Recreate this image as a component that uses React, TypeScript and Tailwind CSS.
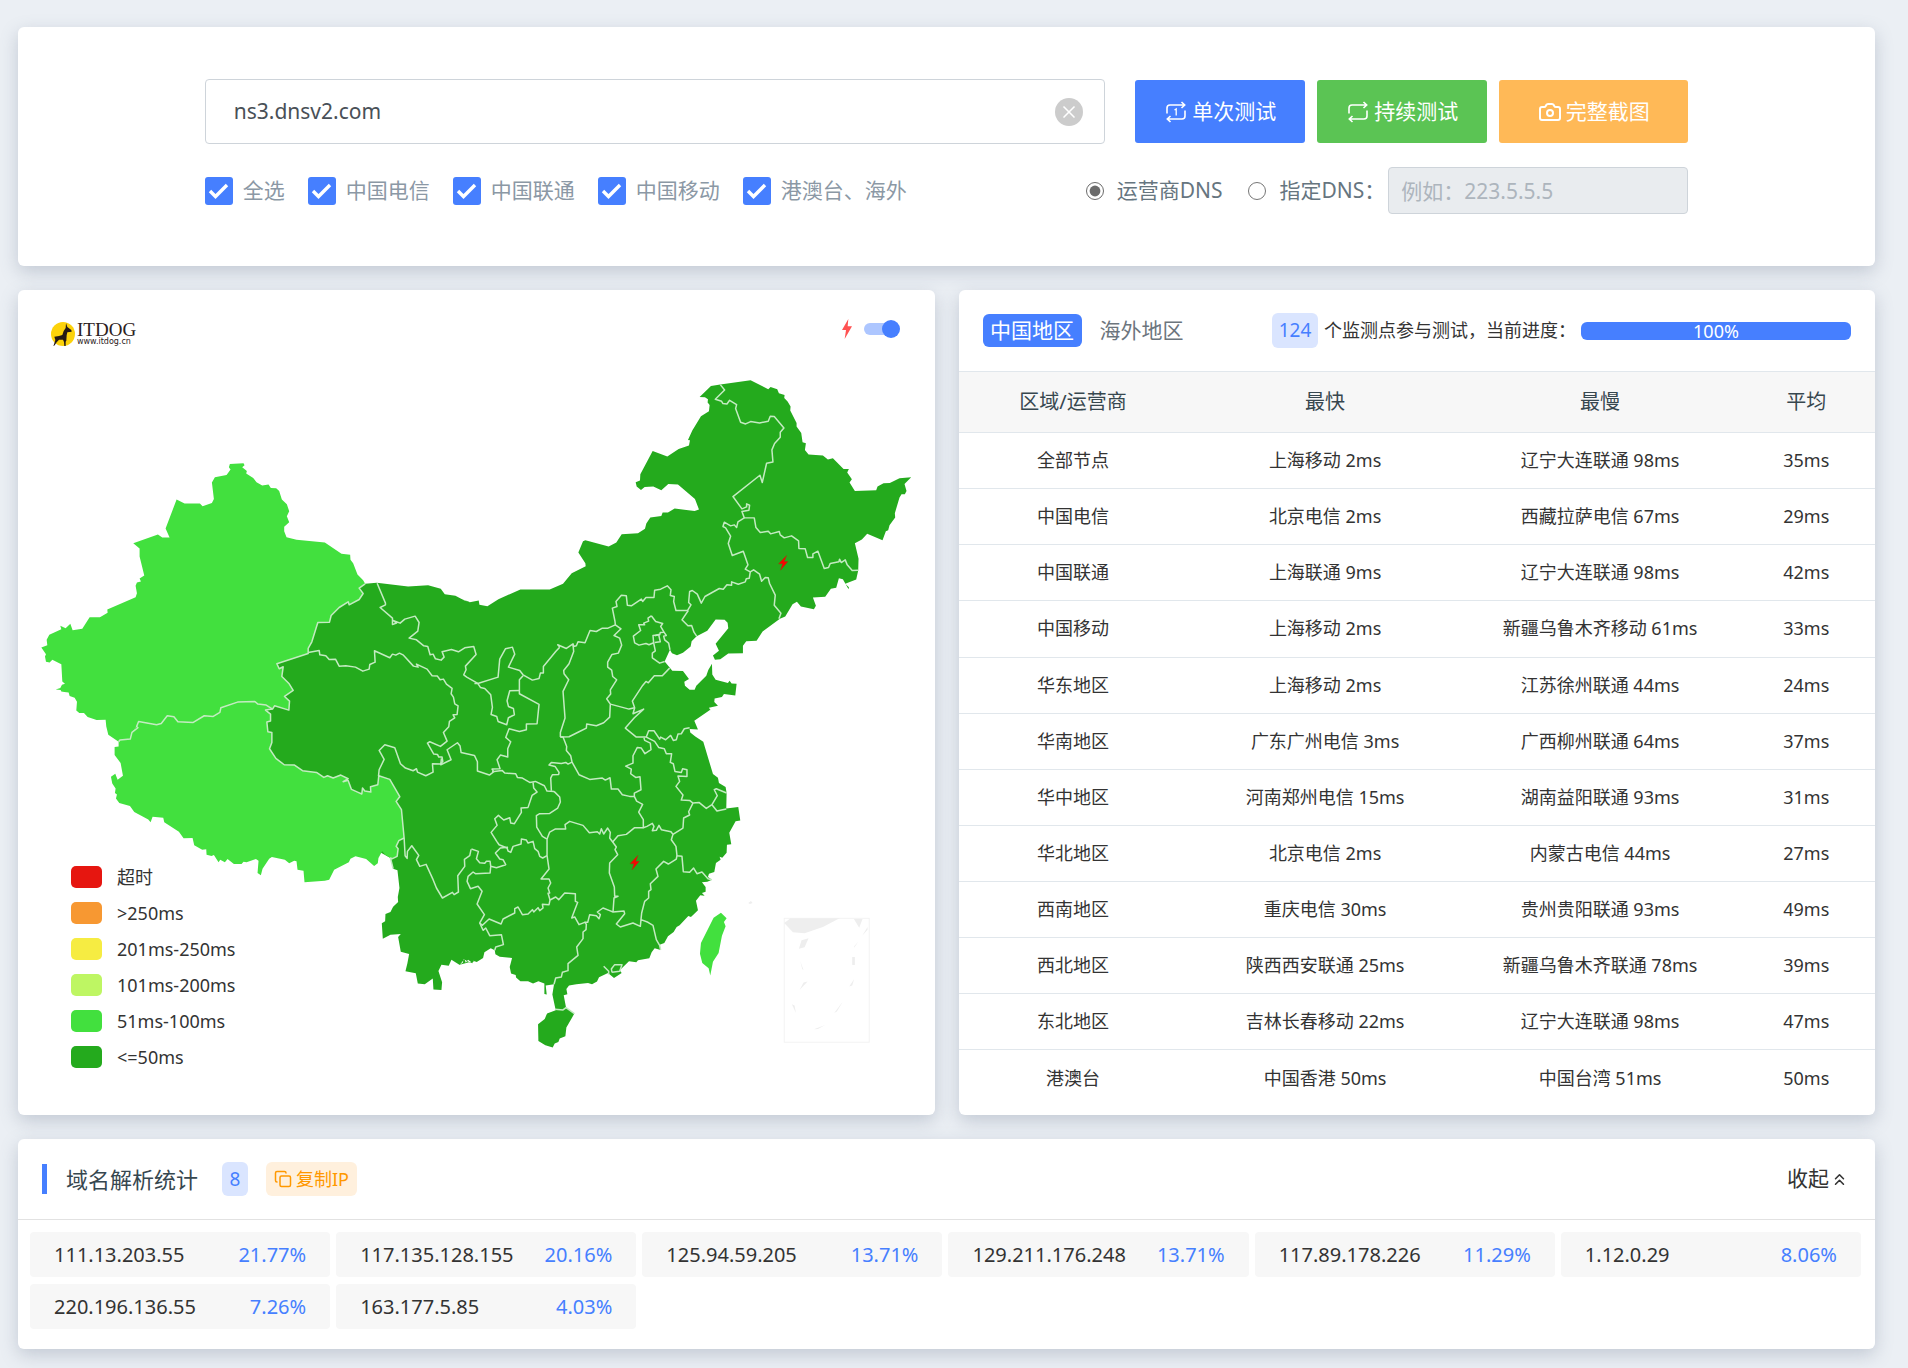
import { Camera, ChevronsUp, Copy, X } from "lucide-react";

type Tile = [dx: number, dy: number, points: string];

// The map is digitised in tiles, every tile with its own origin
const NW: [number, number] = [-54, -30];
const SW: [number, number] = [-54, 1110];
const NE: [number, number] = [1326, 210];
const SE: [number, number] = [1326, 1170];
const MID: [number, number] = [666, 810];

function outline(tiles: Tile[]) {
  const points = tiles.flatMap(([dx, dy, list]) =>
    list.split(" ").map((pair) => {
      const [x, y] = pair.split(",").map(Number);
      return `${x + dx},${y + dy}`;
    }),
  );
  return points.join(" ");
}

const XINJIANG = outline([
  [
    ...NW,
    "690,552 731,550 734,556 727,562 741,573 739,581 760,594 770,607 787,617 806,614 813,624 829,625 838,633 846,659 861,673 868,694 861,709 868,727 853,741 853,754 860,772 890,780 975,788 1025,822 1051,825 1052,840 1060,850 1073,884 1090,901 1096,912 1078,925 1090,941 1078,959 1048,975 1045,966 1018,983 994,1007 989,1027 954,1028 936,1086 925,1106 925,1121 831,1152 838,1167 850,1161",
  ],
  [
    ...SW,
    "846,50 868,72 880,92 854,110 869,124 867,151 824,138 818,148 799,136 774,133 765,125 713,127 663,144 660,158 640,170 613,168 580,188 534,186 522,171 502,168 484,191 470,195 416,185 410,200 396,218 391,238 360,241 356,246 325,225 319,200 317,180 290,181 263,172 252,160 238,160 229,152 231,126 224,114 209,109 206,98 193,97 184,95 182,91 167,89 181,85 186,75 195,72 187,65 184,12",
  ],
  [
    ...NW,
    "184,1153 157,1140 149,1148 138,1146 135,1130 138,1123 124,1103 142,1096 140,1080 148,1065 184,1048 181,1038 197,1045 211,1032 218,1051 247,1047 269,1012 300,1012 323,999 322,989 407,952 411,940 407,918 411,908 423,905 419,896 433,887 419,830 419,806 400,790 474,764 487,773 509,773 497,746 530,659 554,671 600,671 608,679 636,669 642,657 636,608 645,592 680,585 692,569 687,562",
  ],
]);

const TIBET = outline([
  [
    ...SW,
    "818,148 797,151 812,163 812,184 801,187 804,216 816,218 816,248 809,267 828,296 853,315 884,316 908,333 950,338 972,353 983,348 1000,355 1023,346 1045,357 1030,366 1045,362 1055,389 1075,398 1086,403 1088,385 1095,394 1113,397 1112,381 1134,375 1137,348 1170,359 1200,411 1189,425 1205,450 1213,535 1197,543 1189,560 1195,567 1192,590 1178,597 1172,595 1157,586 1147,575 1136,595 1134,611 1123,619 1099,598 1067,590 1052,597 1047,608 1003,630 988,660 975,663 914,668 911,633 893,630 890,605 883,603 868,611 855,600 816,592 808,597 788,627 783,647 773,640 776,603 768,598 740,608 731,606 725,613 702,613 683,598 675,608 661,600 656,608 642,586 635,589 620,585 619,569 607,570 583,557 578,535 551,536 537,516 493,488 490,474 458,471 452,488 445,479 403,457 390,439 358,430 348,416 351,404 345,400 347,386 337,371 333,351 346,342 353,360 369,348 362,310 344,286 344,262 356,260 356,246 360,241 391,238 396,218 410,200 416,185 470,195 484,191 502,168 522,171 534,186 580,188 613,168 640,170 660,158 663,144 713,127 765,125 774,133 799,136",
  ],
]);

const EAST = outline([
  [...NW, "1096,912 1131,909 1225,920 1285,916 1323,927 1335,943 1367,948 1394,962 1412,967"],
  [
    ...NE,
    "0,715 30,727 57,722 59,735 83,739 116,718 182,689 270,689 310,672 336,640 378,619 377,610 356,578 370,544 377,541 447,560 470,548 486,523 535,520 556,507 560,491 572,473 605,468 609,458 625,458 645,446 680,450 705,453 718,449 706,417 655,374 626,372 605,391 581,380 555,381 544,390 531,380 528,367 541,362 542,343 579,273 623,290 657,267 688,257 691,241 685,240 698,212 724,169 748,154 750,135 744,128 745,118 736,112 720,111 754,78 782,74 873,61 926,88 933,81 953,88 958,100 975,105 974,114 984,125 993,140 992,152 1011,189 1011,200 1025,219 1029,247 1039,250 1036,270 1047,284 1090,287 1105,299 1120,295 1152,327 1168,327 1163,338 1177,358 1170,368 1186,393 1250,391 1254,380 1272,370 1291,369 1320,355 1355,352 1335,372 1341,393 1336,403 1326,403 1320,413 1306,460 1307,473 1290,496 1286,511 1279,514 1269,541 1223,522 1207,539 1186,550 1197,597 1196,632 1190,659 1157,672 1168,682 1167,688 1150,658 1138,655 1130,684 1114,687 1097,711 1060,713 1069,738 1063,748 1024,740 1012,726 999,733 977,770 961,777 909,815 891,843 860,844 850,858 850,880 806,881 782,898 766,900 760,887 778,873 768,852 806,805 804,789 795,780 768,779 743,813 711,829 696,844 693,860 670,879 652,886 637,880 631,870 615,905 638,933 670,934 688,958 674,966 676,978 690,990 705,990 710,978 740,948 746,931 757,912 758,944 768,960 805,970 810,963 816,971 831,972 827,1007 793,1003 787,1012 765,1016 764,1027 775,1038 748,1044 757,1058 752,1050 704,1083 715,1109 690,1108",
  ],
  [
    ...SE,
    "692,158 707,170 731,186 760,283 775,294 778,310 798,322 801,340 800,386 836,382 842,422 828,425 809,459 815,494 802,495 801,519 788,534 780,531 783,540 769,550 764,577 748,582 745,592 757,600 743,606 727,608 738,622 738,636 727,640 735,648 722,647 709,663 715,692 694,712 686,709 660,737 651,742 642,757 625,770 614,790 600,795 603,811 585,806 576,818 569,836 535,842 530,848 508,845 480,872 486,880 463,895 445,880 418,893 412,906 397,914 385,910 350,914 328,918 320,928 323,944 312,947 319,984 344,1002 320,1044 317,1070 300,1077 296,1087 285,1092 279,1104 257,1097 236,1084 235,1034 255,1018 262,1002 288,992 278,945 283,914 258,918 261,945 254,943 254,912 236,905 220,912 205,905 182,905 169,894 168,886 154,882 150,862 157,835 120,831 107,824 105,812 93,806 74,818 70,835 51,847 40,843 38,851 20,843 12,838 9,849 0,855",
  ],
  [
    ...SW,
    "1424,903 1417,909 1405,900 1398,909 1394,898 1380,916 1355,900 1347,918 1325,915 1316,934 1327,968 1325,991 1301,990 1299,957 1275,974 1254,972 1248,941 1217,935 1223,910 1228,883 1203,876 1195,832 1203,823 1172,825 1149,837 1146,791 1156,785 1157,763 1172,757 1180,741 1195,727 1194,712 1199,685 1193,632 1180,627 1172,595 1000,500 760,250 780,20",
  ],
  [...NW, "900,1000"],
]);

const BORDERS: { origin: [number, number]; lines: string[] }[] = [
  {
    origin: MID,
    lines: [
      "412,70 437,130 437,135 421,143 458,175 458,194 470,190 460,182 481,190 495,178 526,169 538,188 534,214 508,235 530,240 552,258 564,260 571,285 580,283 587,297 604,301 613,292 607,276 635,269 656,276 675,264 702,260 709,284 677,319 679,330 672,345 681,352 714,371 775,352 780,298 797,267 818,262 825,283 806,322 840,332 850,345 878,361 898,356 902,340 911,340 911,320 948,275 960,262",
      "205,278 238,272 240,285 258,288 268,299 287,298 298,319 318,318 347,322 369,334 388,328 390,314 406,307 404,273 450,294 458,283 468,286 479,280 491,286 521,319 535,322 530,313 562,328 577,348 593,349 601,360 611,358 620,373 637,386 634,402 641,412 645,432 655,438 652,464 640,465 645,474 629,485 627,501 611,518 622,544 602,560 570,546 563,550 582,583 593,584 597,592 607,592 609,605 602,613 578,612 580,637 558,648 533,637 530,627 520,633 497,625 482,612 465,564 435,555 418,572 433,599 418,630 416,650",
      "605,596 603,615 634,600 622,570 653,549 661,559 664,578 704,587 713,606 713,634 749,646 762,636 757,628 781,627 772,600 782,586 804,592 804,567 813,546 798,533 808,507 839,515 860,510 860,493 892,492 898,434 839,402 839,360 850,348",
      "704,371 714,371 722,383 735,386 753,405 758,443 754,464 771,470 775,485 801,495 806,474 824,465 821,446 806,440 802,423 810,393 839,392",
      "757,636 787,632 795,640 828,642 833,653 848,655 870,668 887,665 914,678 922,694 943,695",
    ],
  },
  {
    origin: NE,
    lines: [
      "300,862 294,855 320,866 340,852 342,860 350,858 355,846 376,849 391,812 410,815 428,805 445,805 467,795 466,785 458,745 472,740 469,725 485,706 500,708 503,736 515,738 545,718 549,725 559,713 583,713 585,691 603,688 623,678 634,690 632,707 644,710 642,725 649,752 684,752 694,735 687,728 690,695 698,692 713,703 725,730 736,710 779,686 791,688 802,675 816,676 816,666 836,673 857,666 860,657 869,655 872,636 857,628 865,615 851,574 818,587 806,551 813,529 798,504 790,500 794,487 813,498 824,495 831,503 835,486 854,474 847,455 868,451 870,436 861,432 861,441 847,447 820,410 901,346 908,368 921,310 940,306 937,270 945,251 962,232 962,217 973,204 944,170 932,169 926,184 900,189 873,185 858,192 843,187 828,146 831,134 810,121 802,132 790,131 786,124 767,118 795,90 782,74",
      "854,474 884,474 889,503 902,518 926,514 933,522 959,515 962,525 974,534 996,528 1017,543 1018,566 1037,567 1044,593 1060,593 1060,582 1075,574 1094,626 1107,623 1112,611 1138,606 1140,598 1145,608 1157,600 1163,615 1178,632 1196,631",
      "872,636 882,630 900,643 906,664 917,653 926,654 930,671 947,706 944,736 964,760 958,777",
      "686,752 667,780 685,798 696,797 703,817 711,829",
      "575,768 565,775 567,784 552,790 555,795 537,795 543,812 521,829 525,849 538,856 559,851 568,855 582,849 580,827 600,825 602,818 613,817 603,800 609,791 588,785 575,768",
      "582,849 587,873 578,880 578,894 600,910 615,905",
      "613,817 620,827 612,829 615,840 627,850 630,865 631,870",
      "586,828 597,824 602,846 585,848",
      "340,855 342,875 328,912 312,932 313,942 327,960 310,995 316,1075 302,1118 302,1132",
      "467,795 484,807 463,827 480,835 486,856 476,880 457,884 444,907 444,922 456,931 459,950 471,960 452,990 453,1003 441,1017 452,1033 450,1072 432,1089 410,1098 381,1093 380,1105 358,1116 328,1131 302,1132",
      "630,925 608,948 584,948 566,969 559,965 549,977 518,1024 525,1044 508,1048 452,1033",
      "525,1044 520,1062 552,1048 524,1074 497,1105 530,1132 560,1132 567,1113 583,1113 600,1138 603,1132 618,1140 633,1127 641,1142 650,1140 655,1123 665,1122 674,1107 690,1104",
    ],
  },
  {
    origin: SE,
    lines: [
      "302,172 310,172 321,200 320,212 333,228 337,247 358,285 390,299 428,295 437,301 451,294 455,328 475,328 488,345 510,350 524,350 524,340 544,330 541,291 528,293 513,282 515,268 498,259 520,250 520,228 533,203 545,205 556,222 574,210 572,190 555,182 553,174",
      "337,247 325,253 318,248 305,251 275,248 268,256 286,260 298,278 297,284 278,285 273,295 275,333",
      "560,172 585,185 597,203 614,207 620,222 636,222 632,248 641,252 646,275 665,278 669,267 682,270 682,290 655,289 660,305 649,320 670,346 665,361 690,362 700,370 718,368 740,386 757,375 773,348 764,330 770,327 801,340",
      "757,375 772,394 800,388",
      "700,370 687,396 690,406 672,415 670,445 640,464",
      "524,350 531,364 549,374 537,397 551,420 551,444 562,440 578,431 583,440 578,453 590,452 598,437 605,450 634,456 640,464 635,480 649,500 652,528 667,530 671,576 690,578 702,565 712,582 727,577 745,597 757,600",
      "551,444 525,444 500,464 475,468 459,487",
      "652,528 650,538 626,553 612,545 589,568 595,590 572,612 574,630 567,635 567,655 555,665 546,700 544,720",
      "262,478 270,457 286,448 318,448 316,435 330,425 370,437 389,459 413,456 420,463 425,447 432,463 444,445 452,458 450,475 459,487 470,502 466,510 474,525 450,550 449,580 464,622 465,650 475,650 463,655 460,697",
      "283,335 300,352 302,367 294,385 270,401 240,402 230,408 231,442 248,470 262,478 262,528 268,568 244,598 268,598 273,610 265,625 270,640 265,641 271,661",
      "220,308 222,325 232,337 217,347 205,383 184,385 185,398 164,432 153,430 150,414 132,421 116,407 105,417 112,437 94,458 111,485 118,495 142,505 145,514 153,518 160,500 184,493 185,478 200,481 205,490 220,485 225,507 235,515 240,530 249,535 262,528",
      "145,503 122,505 107,520 120,538 130,540 138,555 110,564 93,560 91,545 80,545 75,551 60,549 50,537 56,515 35,508",
      "93,560 91,580 47,582 40,577 25,590 22,605 32,627 55,620 67,635 52,673 74,705 60,730 68,737 88,718 124,733 130,718 165,700 165,687 175,682 188,705 205,703 218,690 222,697 235,684 240,693 250,685 248,674 268,675 271,661 288,652 297,660 315,640 347,642 347,665 354,668 336,715 345,712 358,735 375,728 380,733",
      "60,730 70,752 78,745 90,768 125,765 131,795 108,802 105,812",
      "380,733 379,750 370,757 370,777 351,802 355,827 325,852 325,873 308,878 305,892 288,895 283,914",
      "375,728 384,728 390,705 410,708 418,717 422,705 413,697 430,685 450,693 460,697 493,694 495,702 470,733 482,742 520,730 542,740 544,720 565,728 580,737 590,780 600,797 603,811",
      "457,878 455,868 465,855 487,855 480,875 457,878",
      "432,860 447,875 447,885",
      "286,989 310,991 319,984 344,1002",
    ],
  },
  {
    origin: SW,
    lines: [
      "1213,535 1216,588 1222,596 1223,575 1236,558 1257,587 1250,600 1260,620 1279,614 1300,660 1310,685 1328,715 1358,698 1363,705 1376,697 1374,648 1395,620 1394,599 1410,588 1414,569",
      "1213,535 1197,543 1189,560 1195,567 1192,590 1178,597 1172,595 1180,627",
    ],
  },
];

const LEGEND = [
  { label: "超时", color: "bg-[#e61610]" },
  { label: ">250ms", color: "bg-[#f79832]" },
  { label: "201ms-250ms", color: "bg-[#f6ec42]" },
  { label: "101ms-200ms", color: "bg-[#bef663]" },
  { label: "51ms-100ms", color: "bg-[#42e03e]" },
  { label: "<=50ms", color: "bg-[#24aa1d]" },
];

const ISPS = ["全选", "中国电信", "中国联通", "中国移动", "港澳台、海外"];

const ROWS = [
  ["全部节点", "上海移动 2ms", "辽宁大连联通 98ms", "35ms"],
  ["中国电信", "北京电信 2ms", "西藏拉萨电信 67ms", "29ms"],
  ["中国联通", "上海联通 9ms", "辽宁大连联通 98ms", "42ms"],
  ["中国移动", "上海移动 2ms", "新疆乌鲁木齐移动 61ms", "33ms"],
  ["华东地区", "上海移动 2ms", "江苏徐州联通 44ms", "24ms"],
  ["华南地区", "广东广州电信 3ms", "广西柳州联通 64ms", "37ms"],
  ["华中地区", "河南郑州电信 15ms", "湖南益阳联通 93ms", "31ms"],
  ["华北地区", "北京电信 2ms", "内蒙古电信 44ms", "27ms"],
  ["西南地区", "重庆电信 30ms", "贵州贵阳联通 93ms", "49ms"],
  ["西北地区", "陕西西安联通 25ms", "新疆乌鲁木齐联通 78ms", "39ms"],
  ["东北地区", "吉林长春移动 22ms", "辽宁大连联通 98ms", "47ms"],
  ["港澳台", "中国香港 50ms", "中国台湾 51ms", "50ms"],
];

const IPS = [
  ["111.13.203.55", "21.77%"],
  ["117.135.128.155", "20.16%"],
  ["125.94.59.205", "13.71%"],
  ["129.211.176.248", "13.71%"],
  ["117.89.178.226", "11.29%"],
  ["1.12.0.29", "8.06%"],
  ["220.196.136.55", "7.26%"],
  ["163.177.5.85", "4.03%"],
];

const CARD = "rounded-md bg-white shadow-[0_6px_18px_rgba(90,105,130,0.28)]";

function RepeatIcon({ once = false }: { once?: boolean }) {
  return (
    <svg
      viewBox="0 0 24 24"
      className="size-6"
      fill="none"
      stroke="currentColor"
      strokeWidth="1.6"
      aria-hidden="true"
    >
      <path d="M3 13.5V8a3 3 0 0 1 3-3h14.5M17.5 2l3.2 3-3.2 3" />
      <path d="M21 10.5V16a3 3 0 0 1-3 3H3.5M6.5 22l-3.2-3 3.2-3" />
      {once && <path d="M10.5 10l1.7-1v6.5" strokeWidth="1.3" />}
    </svg>
  );
}

function IspCheckbox({ label }: { label: string }) {
  return (
    <label className="flex items-center gap-2.5">
      <span className="grid size-7">
        <input
          type="checkbox"
          defaultChecked
          className="col-start-1 row-start-1 size-7 appearance-none rounded-[3px] bg-[#467fff]"
        />
        <svg
          viewBox="0 0 28 28"
          className="pointer-events-none col-start-1 row-start-1 size-7"
          fill="none"
          stroke="#fff"
          strokeWidth="3.4"
        >
          <path d="M5 14l5.5 5.5L22 8" />
        </svg>
      </span>
      {label}
    </label>
  );
}

function QueryPanel() {
  return (
    <form className={`${CARD} py-[52px]`}>
      <div className="mx-auto w-4/5 px-px">
        <div className="flex items-center">
          <div className="flex h-[65px] min-w-0 flex-1 items-center rounded border border-[#ced4da] pr-[21px] pl-7">
            <input
              type="text"
              aria-label="域名"
              defaultValue="ns3.dnsv2.com"
              className="min-w-0 flex-1 text-[21px] text-[#495057] outline-none"
            />
            <button
              type="button"
              aria-label="清空"
              className="flex size-7 items-center justify-center rounded-full bg-[#ccc] text-white"
            >
              <X className="size-5" strokeWidth={2} />
            </button>
          </div>
          <div className="ml-[30px] flex gap-3 text-[21px] text-white">
            <button
              type="button"
              className="flex h-[63px] w-[170px] items-center justify-center gap-1 rounded-[3px] bg-[#467fff]"
            >
              <RepeatIcon once />
              单次测试
            </button>
            <button
              type="button"
              className="flex h-[63px] w-[170px] items-center justify-center gap-1 rounded-[3px] bg-[#5bc454]"
            >
              <RepeatIcon />
              持续测试
            </button>
            <button
              type="button"
              className="flex h-[63px] w-[189px] items-center justify-center gap-1 rounded-[3px] bg-[#ffb957]"
            >
              <Camera className="size-6" strokeWidth={2} />
              完整截图
            </button>
          </div>
        </div>

        <div className="mt-[23px] flex items-center text-[21px] text-[#8b98a5]">
          <div className="flex gap-[23px]">
            {ISPS.map((label) => (
              <IspCheckbox key={label} label={label} />
            ))}
          </div>
          <div className="ml-auto flex items-center text-[#66757f]">
            <label className="flex items-center gap-[13px]">
              <input type="radio" name="dns" defaultChecked className="size-[18px] accent-[#6b6b6b]" />
              运营商DNS
            </label>
            <label className="mr-[3px] ml-[26px] flex items-center gap-[13px]">
              <input type="radio" name="dns" className="size-[18px]" />
              指定DNS：
            </label>
            <input
              type="text"
              disabled
              aria-label="DNS"
              placeholder="例如：223.5.5.5"
              className="h-[47px] w-[300px] rounded border border-[#ced4da] bg-[#e9ecef] px-3 placeholder:text-[#adb5bd]"
            />
          </div>
        </div>
      </div>
    </form>
  );
}

function Logo() {
  return (
    <div className="flex items-center gap-[2px] text-[#2b2020]">
      <svg viewBox="0 0 72 72" className="size-6">
        <circle cx="36" cy="36" r="36" fill="#fcd20a" />
        <path
          d="M45 3l4 12 12 9 1 5-13 2-2 9-1 16-2 3v14h-4l-1-13-3-7-12 0-7 8-6 9-4 3 4-12 2-7-3-10 14-2 10-3 4-12 6-9z"
          fill="#231815"
        />
      </svg>
      <div>
        <div className="font-['Liberation_Serif',serif] text-[19px] leading-4">ITDOG</div>
        <div className="font-['DejaVu_Sans',sans-serif] text-[8px] leading-2">www.itdog.cn</div>
      </div>
    </div>
  );
}

function Bolt({ x, y }: { x: number; y: number }) {
  return (
    <path
      transform={`translate(${x} ${y})`}
      d="M10-22L-14 3-2 3-8 22 14-4 3-4z"
      fill="#fe0000"
      stroke="#8a4a10"
      strokeWidth="1.5"
    />
  );
}

function ChinaMap() {
  return (
    <svg viewBox="0 0 2751 2475" className="block w-full" role="img" aria-label="中国地图">
      <polygon points={EAST} fill="#24aa1d" />
      <g fill="#42e03e">
        <polygon points={XINJIANG} />
        <polygon points={TIBET} />
      </g>
      <g fill="none" stroke="#c3ebc1" strokeWidth="4.5" strokeLinejoin="round">
        {BORDERS.map(({ origin, lines }) => (
          <g key={origin.join()} transform={`translate(${origin.join()})`}>
            {lines.map((points) => (
              <polyline key={points} points={points} />
            ))}
          </g>
        ))}
        <polyline
          points={outline([
            [
              ...NW,
              "1096,912 1078,925 1090,941 1078,959 1048,975 1045,966 1018,983 994,1007 989,1027 954,1028 936,1086 925,1106 925,1121 831,1152 838,1167 850,1161",
            ],
            [
              ...SW,
              "846,50 868,72 880,92 854,110 869,124 867,151 824,138 818,148 797,151 812,163 812,184 801,187 804,216 816,218 816,248 809,267 828,296 853,315 884,316 908,333 950,338 972,353 983,348 1000,355 1023,346 1045,357 1030,366 1045,362 1055,389 1075,398 1086,403 1088,385 1095,394 1113,397 1112,381 1134,375 1137,348 1170,359 1200,411 1189,425 1205,450 1213,535",
            ],
          ])}
        />
        <polyline
          points={outline([
            [
              ...SW,
              "356,246 360,241 391,238 396,218 414,204 410,200 416,185 470,195 484,191 502,168 522,171 534,186 580,188 613,168 640,170 660,158 663,144 713,127 765,125 774,133 799,136 818,148",
            ],
          ])}
        />
      </g>
      <g transform={`translate(${SE.join()})`}>
        <polygon
          points="784,699 762,714 724,790 721,822 728,850 747,866 752,888 760,846 777,820 787,768 798,740 793,727 801,716"
          fill="#42e03e"
        />
        <rect x="974" y="716" width="255" height="372" fill="none" stroke="#f3f3f3" strokeWidth="3" />
        <g fill="#eee">
          <path d="M974 730l19-14h147l-50 26-55 19-35-3z" />
          <path d="M1183 718h26l-10 26z" />
          <path d="M1026 782l21-6-12 27-17 4z" />
          <path d="M1178 832h8v24h-8z" />
          <path d="M866 670l8-6 5 6-8 3z" />
          <path d="M1224 742v8l-16 18zM1196 786l-12 18v-4zM1022 844l10 28-4-4zM1044 906l-24 25 12-22zM1184 898l-6 20-9 3zM997 974l8 4 4 22zM1150 966l-18 30-8 4zM1097 1036l-22 12-12 1z" />
        </g>
        <Bolt x={971} y={-351} />
        <Bolt x={525} y={549} />
      </g>
    </svg>
  );
}

function MapPanel() {
  return (
    <section className={`${CARD} relative overflow-hidden`}>
      <ChinaMap />
      <div className="absolute top-8 left-[33px]">
        <Logo />
      </div>
      <label className="absolute top-[29px] right-[35px] flex items-center gap-3">
        <svg viewBox="0 0 30 60" className="h-5 w-2.5" fill="#ff5252" aria-hidden="true">
          <path d="M19 0L0 33h12L8 60 30 22H17z" />
        </svg>
        <span className="grid items-center">
          <input
            type="checkbox"
            role="switch"
            aria-label="闪烁"
            defaultChecked
            className="col-start-1 row-start-1 h-3 w-[34px] appearance-none rounded-full bg-[#adc6ff]"
          />
          <span className="pointer-events-none col-start-1 row-start-1 ml-[18px] size-[18px] rounded-full bg-[#467fff]" />
        </span>
      </label>
      <ul className="absolute bottom-[46px] left-[53px] text-[18px] leading-6 text-[#333]">
        {LEGEND.map(({ label, color }) => (
          <li key={label} className="mt-3 flex h-6 items-center gap-[15px]">
            <span className={`h-[22px] w-[31px] rounded-[5px] ${color}`} />
            {label}
          </li>
        ))}
      </ul>
    </section>
  );
}

function ResultPanel() {
  return (
    <section className={`${CARD} pb-[9px]`}>
      <div className="flex h-[81px] items-center px-6">
        <button type="button" className="h-[33px] w-[99px] rounded-md bg-[#467fff] text-[21px] leading-none text-white">
          中国地区
        </button>
        <button type="button" className="ml-[18px] text-[21px] text-[#6c757d]">
          海外地区
        </button>
        <div className="ml-auto flex items-center text-[18px] text-[#333]">
          <span className="mr-1.5 flex h-[35px] w-[46px] items-center justify-center rounded-md bg-[#dae5ff] text-[19px] text-[#467fff]">
            124
          </span>
          个监测点参与测试，当前进度：
          <span className="ml-[5px] flex h-[18px] w-[270px] items-center justify-center rounded-md bg-[#467fff] leading-none text-white">
            100%
          </span>
        </div>
      </div>
      <table className="h-[735px] w-full table-fixed text-center text-[18px] text-[#333]">
        <thead>
          <tr className="h-[61px] border-y border-[#e1e7ec] bg-[#f7f7f7] text-[20px] text-[#37474f]">
            <th className="w-1/4 font-normal">区域/运营商</th>
            <th className="w-[30%] font-normal">最快</th>
            <th className="w-[30%] font-normal">最慢</th>
            <th className="w-[15%] font-normal">平均</th>
          </tr>
        </thead>
        <tbody>
          {ROWS.map((row) => (
            <tr key={row[0]} className="h-14 border-b border-[#e1e7ec] last:border-0">
              {row.map((cell, i) => (
                <td key={i}>{cell}</td>
              ))}
            </tr>
          ))}
        </tbody>
      </table>
    </section>
  );
}

function IpPanel() {
  return (
    <section className={`${CARD} pb-5`}>
      <div className="flex h-[81px] items-center border-b border-[#e2e2e2] px-6">
        <h2 className="flex items-center gap-[19px] text-[22px] text-[#37474f]">
          <span className="h-[30px] w-[5px] bg-[#467fff]" />
          域名解析统计
        </h2>
        <span className="ml-6 flex h-[34px] w-[26px] items-center justify-center rounded-md bg-[#dae5ff] text-[19px] text-[#467fff]">
          8
        </span>
        <button
          type="button"
          className="ml-[18px] flex h-[34px] w-[91px] items-center justify-center gap-1 rounded-md bg-[#fff0dd] text-[18px] text-[#ff9800]"
        >
          <Copy className="size-[18px]" strokeWidth={2} />
          复制IP
        </button>
        <button type="button" className="mr-0.5 ml-auto flex items-center gap-px text-[21px] text-[#333]">
          收起
          <ChevronsUp className="size-[19px]" strokeWidth={2} />
        </button>
      </div>
      <ul className="grid grid-cols-6 gap-x-1.5 gap-y-[7px] pt-3 pr-3.5 pl-3 text-[20px]">
        {IPS.map(([ip, share]) => (
          <li key={ip} className="flex h-[45px] items-center justify-between rounded bg-[#f7f7f7] px-6 text-[#333]">
            {ip}
            <span className="text-[#467fff]">{share}</span>
          </li>
        ))}
      </ul>
    </section>
  );
}

export default function App() {
  return (
    <main className="flex min-h-screen flex-col gap-6 bg-[#ebeff4] pt-[27px] pr-[33px] pb-[19px] pl-[18px] font-['Noto_Sans','Noto_Sans_CJK_SC',sans-serif]">
      <QueryPanel />
      <div className="grid grid-cols-2 items-start gap-6">
        <MapPanel />
        <ResultPanel />
      </div>
      <IpPanel />
    </main>
  );
}
